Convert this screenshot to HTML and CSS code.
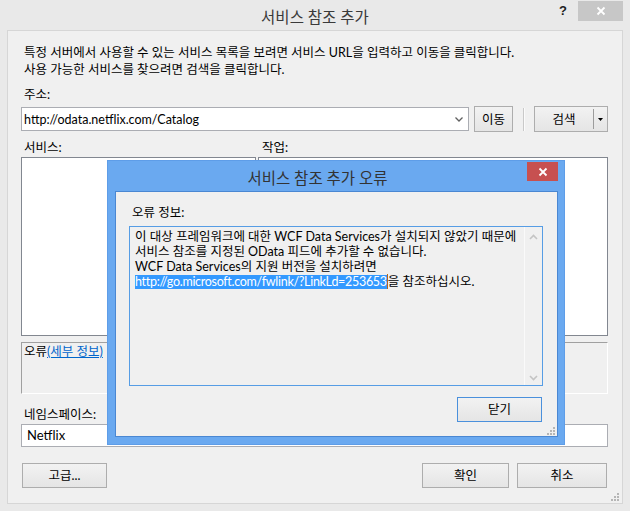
FILE: index.html
```html
<!DOCTYPE html>
<html lang="ko">
<head>
<meta charset="utf-8">
<title>서비스 참조 추가</title>
<link rel="stylesheet" href="styles.css">
</head>
<body>
<div class="window">
  <div class="titlebar">
    <div class="title">서비스 참조 추가</div>
    <div class="tb-right">
      <div class="help">?</div>
      <div class="close">
        <svg width="10" height="10" viewBox="0 0 10 10"><path d="M1.5 1.5 L8.5 8.5 M8.5 1.5 L1.5 8.5" stroke="#fff" stroke-width="1.8"/></svg>
      </div>
    </div>
  </div>
  <div class="client">
    <p class="intro">특정 서버에서 사용할 수 있는 서비스 목록을 보려면 서비스 URL을 입력하고 이동을 클릭합니다.<br>사용 가능한 서비스를 찾으려면 검색을 클릭합니다.</p>
    <div class="label">주소:</div>
    <div class="addr-row">
      <div class="combo">
        <span class="combo-text">http://odata.netflix.com/Catalog</span>
        <svg class="chev" width="8" height="5" viewBox="0 0 8 5"><path d="M0.5 0.5 L4 4 L7.5 0.5" fill="none" stroke="#606060" stroke-width="1.3"/></svg>
      </div>
      <div class="btn go">이동</div>
      <div class="sep"></div>
      <div class="btn split">
        <span class="split-main">검색</span>
        <span class="split-arrow"><svg width="5" height="3" viewBox="0 0 5 3"><path d="M0 0 H5 L2.5 3 Z" fill="#000"/></svg></span>
      </div>
    </div>
    <div class="labels">
      <div class="lab-svc">서비스:</div>
      <div class="lab-ops">작업:</div>
    </div>
    <div class="panes">
      <div class="pane svc"></div>
      <div class="pane ops"></div>
    </div>
    <div class="errbox">오류<a class="link">(세부 정보)</a></div>
    <div class="label ns-label">네임스페이스:</div>
    <div class="ns">Netflix</div>
    <div class="footer">
      <div class="btn adv">고급...</div>
      <div class="spacer"></div>
      <div class="btn ok">확인</div>
      <div class="btn cancel">취소</div>
    </div>
    <svg class="grip" width="8" height="8" viewBox="0 0 8 8"><g fill="#b5b5b5"><rect x="6" y="0" width="2" height="2"/><rect x="3" y="3" width="2" height="2"/><rect x="6" y="3" width="2" height="2"/><rect x="0" y="6" width="2" height="2"/><rect x="3" y="6" width="2" height="2"/><rect x="6" y="6" width="2" height="2"/></g></svg>
  </div>

  <div class="dialog">
    <div class="dlg-titlebar">
      <div class="dlg-title">서비스 참조 추가 오류</div>
      <div class="dlg-close">
        <svg width="10" height="10" viewBox="0 0 10 10"><path d="M1.5 1.5 L8.5 8.5 M8.5 1.5 L1.5 8.5" stroke="#fff" stroke-width="1.8"/></svg>
      </div>
    </div>
    <div class="dlg-client">
      <div class="dlg-label">오류 정보:</div>
      <div class="textbox">
        <div class="tb-text">이 대상 프레임워크에 대한 WCF Data Services가 설치되지 않았기 때문에<br>서비스 참조를 지정된 OData 피드에 추가할 수 없습니다.<br>WCF Data Services의 지원 버전을 설치하려면<br><span class="sel">http://go.microsoft.com/fwlink/?LinkLd=253653</span>을 참조하십시오.</div>
        <div class="tb-scroll">
          <svg width="9" height="6" viewBox="0 0 9 6"><path d="M1 5 L4.5 1.5 L8 5" fill="none" stroke="#c4c4c4" stroke-width="1.6"/></svg>
          <svg width="9" height="6" viewBox="0 0 9 6"><path d="M1 1 L4.5 4.5 L8 1" fill="none" stroke="#c4c4c4" stroke-width="1.6"/></svg>
        </div>
      </div>
      <div class="dlg-actions">
        <div class="btn close-btn">닫기</div>
      </div>
      <svg class="dlg-grip" width="8" height="8" viewBox="0 0 8 8"><g fill="#b5b5b5"><rect x="6" y="0" width="2" height="2"/><rect x="3" y="3" width="2" height="2"/><rect x="6" y="3" width="2" height="2"/><rect x="0" y="6" width="2" height="2"/><rect x="3" y="6" width="2" height="2"/><rect x="6" y="6" width="2" height="2"/></g></svg>
    </div>
  </div>
</div>
</body>
</html>
```

FILE: styles.css
```css
* { box-sizing: border-box; }

body {
  margin: 0;
  background: #e9e9e9;
  font-family: Lato, "Noto Sans CJK KR", sans-serif;
  font-size: 12.5px;
  color: #000;
}

.window {
  position: relative;
  width: 630px;
  height: 511px;
  overflow: hidden;
  background: #e9e9e9;
}

/* Title bar */
.titlebar {
  height: 30px;
  display: grid;
  grid-template-columns: 1fr auto 1fr;
}
.title {
  grid-column: 2;
  font-size: 15.5px;
  line-height: 26px;
  padding-top: 4px;
  color: #3a3a3a;
  white-space: nowrap;
}
.tb-right {
  grid-column: 3;
  display: flex;
  justify-content: flex-end;
  align-items: flex-start;
  padding-right: 7px;
}
.help {
  font-family: "Liberation Sans", sans-serif;
  font-weight: bold;
  font-size: 13px;
  line-height: 14px;
  margin-top: 4px;
  margin-right: 11px;
  color: #1e1e1e;
}
.close {
  width: 45px;
  height: 20px;
  margin-top: 1px;
  background: #c7c7c7;
  display: flex;
  align-items: center;
  justify-content: center;
}

/* Client area */
.client {
  position: relative;
  margin-left: 7px;
  width: 616px;
  height: 474px;
  border: 1px solid #d6d6d6;
  background: #f0f0f0;
  padding: 13px 14px 0 13px;
  display: flex;
  flex-direction: column;
}
.intro {
  margin: 0;
  padding-left: 3px;
  line-height: 17px;
  white-space: nowrap;
}
.label {
  margin-top: 8px;
  padding-left: 3px;
  line-height: 17px;
}

.addr-row {
  margin-top: 3px;
  display: flex;
  align-items: flex-start;
  height: 26px;
}
.combo {
  margin-top: 1px;
  width: 448px;
  height: 24px;
  background: #fff;
  border: 1px solid #abadb3;
  display: flex;
  align-items: center;
  padding: 0 5px 0 2px;
}
.combo-text {
  flex: 1;
  line-height: 17px;
  font-size: 12.5px;
}
.chev { margin-top: 1px; }

.btn {
  border: 1px solid #adadad;
  background: linear-gradient(#f2f2f2, #e5e5e5);
  display: flex;
  align-items: center;
  justify-content: center;
  line-height: 17px;
}
.go {
  margin-left: 5px;
  width: 39px;
  height: 26px;
}
.sep {
  margin: 2px 9px 0 10px;
  width: 2px;
  height: 23px;
  border-left: 1px solid #c9c9c9;
  border-right: 1px solid #fbfbfb;
}
.split {
  width: 74px;
  height: 26px;
  justify-content: flex-start;
  align-items: stretch;
}
.split-main {
  width: 59px;
  display: flex;
  align-items: center;
  justify-content: center;
  border-right: 1px solid #9c9c9c;
  margin: 2px 0;
}
.split-arrow {
  flex: 1;
  display: flex;
  align-items: center;
  justify-content: center;
}

.labels {
  margin-top: 7px;
  display: flex;
  line-height: 17px;
}
.lab-svc { width: 237px; padding-left: 3px; }
.lab-ops { padding-left: 4px; }

.panes {
  margin-top: 1px;
  display: flex;
  gap: 2px;
  height: 179px;
}
.pane {
  background: #fff;
  border: 1px solid #828790;
}
.svc { width: 235px; }
.ops { flex: 1; }

.errbox {
  margin-top: 6px;
  height: 52px;
  border: 1px solid;
  border-color: #a0a0a0 #ffffff #ffffff #a0a0a0;
  padding-left: 2px;
  line-height: 17px;
}
.link {
  color: #0066cc;
  text-decoration: underline;
}

.ns-label { margin-top: 12px; }
.ns {
  margin-top: 1px;
  height: 23px;
  background: #fff;
  border: 1px solid #abadb3;
  padding-left: 5px;
  line-height: 21px;
  font-size: 13px;
}

.footer {
  margin-top: 16px;
  display: flex;
  height: 25px;
}
.footer .btn { height: 25px; }
.adv { margin-left: 1px; width: 85px; }
.spacer { flex: 1; }
.ok { width: 87px; margin-right: 8px; }
.cancel { width: 90px; margin-right: 1px; }

.grip {
  position: absolute;
  right: 3px;
  bottom: 2px;
}

/* Error dialog */
.dialog {
  position: absolute;
  left: 107px;
  top: 160px;
  width: 458px;
  height: 285px;
  background: #6aa9f0;
  border: 1px solid #5e9de8;
  display: flex;
  flex-direction: column;
}
.dlg-titlebar {
  height: 30px;
  display: flex;
  align-items: flex-start;
}
.dlg-title {
  flex: 1;
  text-align: center;
  font-size: 15.5px;
  line-height: 22px;
  padding-top: 6px;
  color: #333;
  white-space: nowrap;
}
.dlg-close {
  margin-top: 1px;
  margin-right: 6px;
  width: 31px;
  height: 19px;
  background: #c75050;
  display: flex;
  align-items: center;
  justify-content: center;
}
.dlg-client {
  position: relative;
  flex: 1;
  margin: 0 6px 7px 7px;
  background: #f0f0f0;
  border: 1px solid #4a87d2;
  display: flex;
  flex-direction: column;
  padding: 12px 14px 0 13px;
}
.dlg-label {
  padding-left: 3px;
  line-height: 17px;
}
.textbox {
  margin-top: 5px;
  height: 160px;
  border: 1px solid #569de5;
  display: flex;
}
.tb-text {
  flex: 1;
  padding: 2px 0 0 5px;
  line-height: 15px;
  white-space: nowrap;
}
.sel {
  color: #fff;
  letter-spacing: -0.3px;
  background: linear-gradient(#3399ff, #3399ff) 0 55% / 100% 14px no-repeat;
  border-right: 1px solid #b4651c;
}
.tb-scroll {
  width: 18px;
  border-left: 1px solid #fafafa;
  display: flex;
  flex-direction: column;
  justify-content: space-between;
  align-items: center;
  padding: 7px 0 4px;
}
.dlg-actions {
  margin-top: 11px;
  display: flex;
  justify-content: flex-end;
  padding-right: 1px;
}
.close-btn {
  width: 85px;
  height: 25px;
  border-color: #4a90dc;
}
.dlg-grip {
  position: absolute;
  right: 2px;
  bottom: 1px;
}
```
